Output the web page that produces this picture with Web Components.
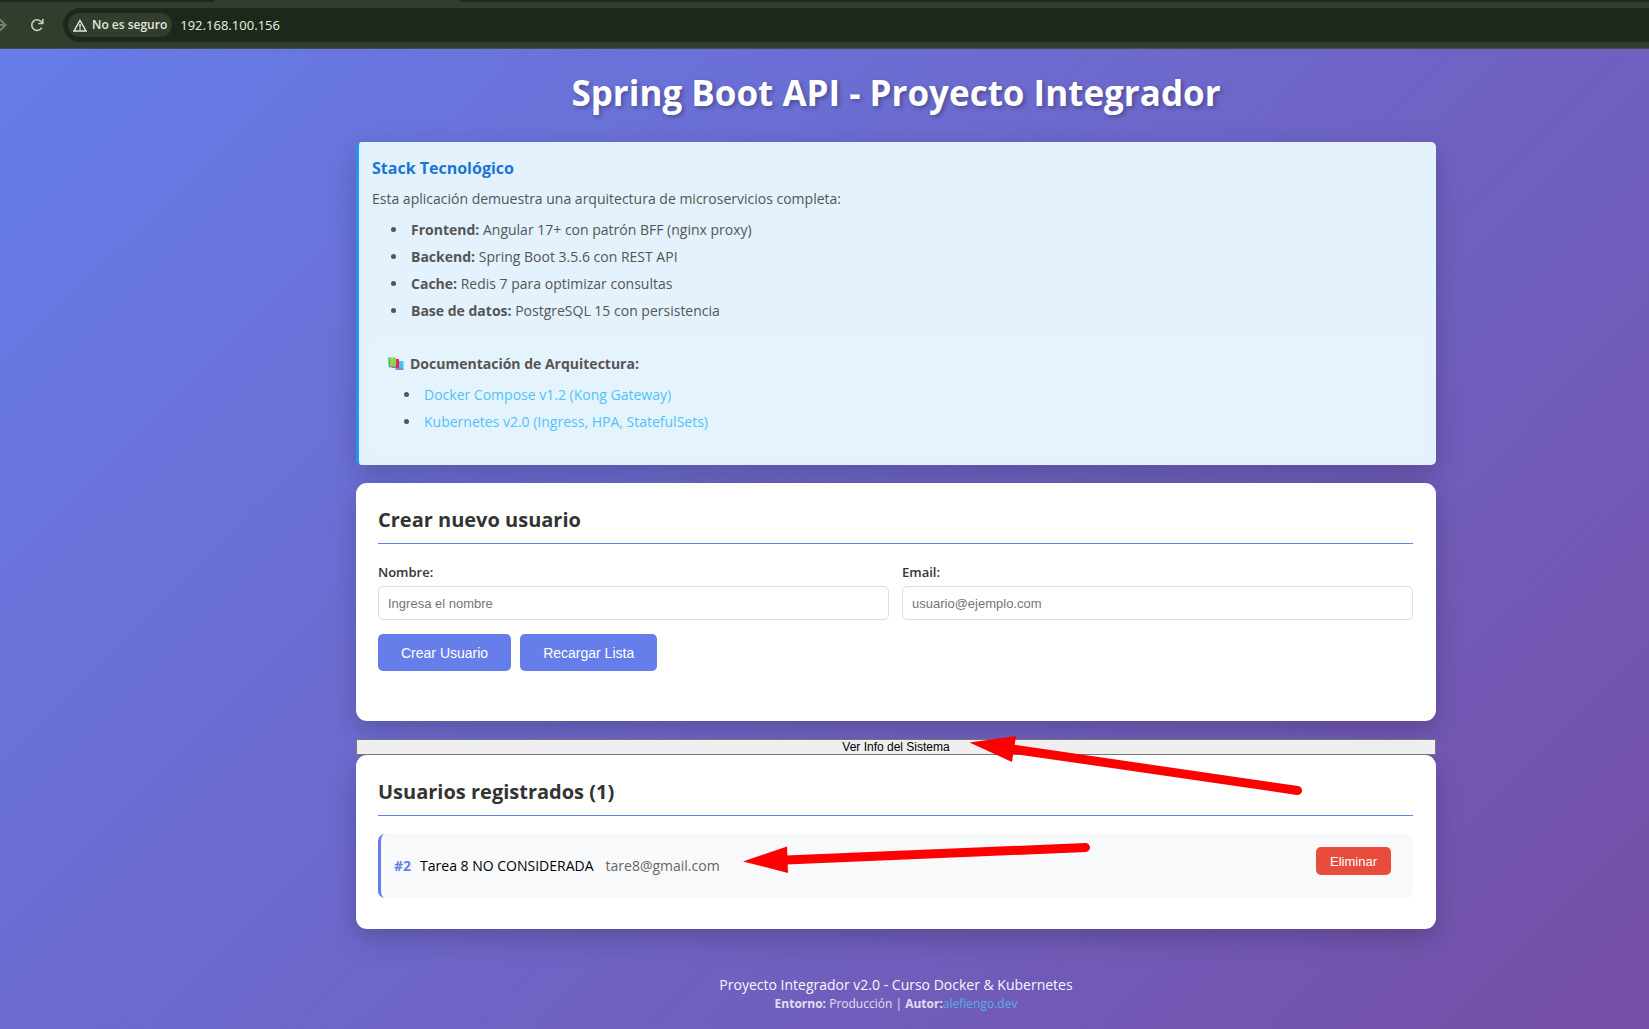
<!DOCTYPE html>
<html lang="es">
<head>
<meta charset="utf-8">
<title>Spring Boot API - Proyecto Integrador</title>
<style>
  html, body { margin: 0; min-height: 100vh; }
  body { display: flex; flex-direction: column; font-family: "Open Sans", "Noto Sans", sans-serif; font-size: 14px; background: #6b62c0; overflow: hidden; }
  integrador-app { flex: 1; }
</style>
</head>
<body>
<browser-bar status="No es seguro" address="192.168.100.156"></browser-bar>
<integrador-app></integrador-app>

<template id="t-browser">
  <style>
    :host { display: flex; flex-direction: column; height: 49px; box-sizing: border-box; background: #313d2d; border-bottom: 1px solid #474b4b; overflow: hidden; flex: none; }
    .tabs { display: flex; height: 2px; gap: 244px; flex: none; }
    .tabs i { background: #1c2819; }
    .tabs i:first-child { width: 215px; border-bottom-right-radius: 6px 2px; }
    .tabs i:last-child { flex: 1; border-bottom-left-radius: 6px 2px; }
    .row { display: flex; align-items: center; flex: 1; }
    svg { display: block; flex: none; }
    .nav { display: flex; align-items: center; gap: 23px; width: 63px; height: 16px; }
    .omni { flex: 1; height: 34px; display: flex; align-items: center; gap: 8px; box-sizing: border-box; padding-left: 5px; background: #1c2819; border-radius: 17px 0 0 17px; }
    .chip { display: flex; align-items: center; gap: 5px; height: 24px; padding: 0 5px; border: 0; border-radius: 12px; background: #313d2d; color: #e3e8df; font: 600 12px/24px "Open Sans", sans-serif; }
    .addr { flex: 1; border: 0; padding: 0; outline: 0; background: none; color: #e3e8df; font: 13px/20px "Noto Sans", sans-serif; }
  </style>
  <div class="tabs"><i></i><i></i></div>
  <div class="row">
    <div class="nav">
      <svg width="7" height="14" viewBox="0 0 7 14" fill="none" stroke="#77806f" stroke-width="2"><path d="M0 7h5M0 1.500 5.500 7 0 12.500"/></svg>
      <svg width="14" height="14" viewBox="0 0 14 14" fill="none" stroke="#c3d2bb" stroke-width="1.600"><path d="M11.700 9.600A5.300 5.300 0 1 1 11.200 3.700L12.700 5.200"/><path d="M12.800 1v4.500H8.300"/></svg>
    </div>
    <div class="omni">
      <button class="chip" type="button">
        <svg width="14" height="13" viewBox="0 0 14 13" fill="none" stroke="#e3e8df" stroke-width="1.500"><path d="M7 1.500 13 12H1Z"/><path d="M7 5v3.500M7 9.300v1.400"/></svg>
        <span></span>
      </button>
      <input class="addr" type="text" aria-label="Dirección">
    </div>
  </div>
</template>

<template id="t-app">
  <style>
    :host { display: block; box-sizing: border-box; padding: 19px 0 0 143px; background: linear-gradient(135deg, #667eea 0%, #764ba2 100%) -64px 0 / calc(100% + 271px) 100% no-repeat; }
    main { position: relative; display: flex; flex-direction: column; width: calc(100% - 80px); max-width: 1080px; margin: 0 auto; }
    h1 { margin: 0 0 25px; text-align: center; color: #fff; font-size: 35px; line-height: 49px; font-weight: 700; text-shadow: 2px 2px 4px rgba(0,0,0,.3); }
    stack-card, .form { margin-bottom: 18px; }
    .info { position: relative; z-index: 1; display: block; width: 100%; height: 16px; padding: 0; border: 1px solid #767676; background: #efefef; color: #000; font: 12px/14px "Liberation Sans", Arial, sans-serif; }
    .arrows { position: absolute; z-index: 2; left: 387px; top: 664px; margin-top: -1px; pointer-events: none; }
    footer { margin-top: 47px; text-align: center; color: #fff; line-height: 18px; }
    footer p { margin: 0; }
    footer .env { font-size: 12px; line-height: 20px; opacity: .8; }
    footer a { color: #4fc3f7; text-decoration: none; }
    footer p:first-child { opacity: .95; }
  </style>
  <main>
    <h1>Spring Boot API - Proyecto Integrador</h1>
    <stack-card></stack-card>
    <panel-card class="form" heading="Crear nuevo usuario"><user-form></user-form></panel-card>
    <button class="info" type="button">Ver Info del Sistema</button>
    <panel-card heading="Usuarios registrados (1)">
      <user-item uid="#2" name="Tarea 8 NO CONSIDERADA" email="tare8@gmail.com"></user-item>
    </panel-card>
    <footer>
      <p>Proyecto Integrador v2.0 - Curso Docker &amp; Kubernetes</p>
      <p class="env"><b>Entorno:</b> Producción | <b>Autor:</b><a href="#autor">alefiengo.dev</a></p>
    </footer>
    <svg class="arrows" width="560" height="148" viewBox="743 731 560 148" fill="#f00" stroke="none" aria-hidden="true">
      <path d="M969.500 742.500 1016 736 1012 762Z"/><path d="M1012 749 1297.500 790.500" stroke="#f00" stroke-width="9" stroke-linecap="round"/>
      <path d="M743 861.500 787 846.500 788 873Z"/><path d="M786 860 1085.500 847.500" stroke="#f00" stroke-width="9" stroke-linecap="round"/>
    </svg>
  </main>
</template>

<template id="t-stack">
  <style>
    :host { display: block; padding: 14px 13px 13px; border-left: 3px solid #2196f3; border-radius: 5px; background: #e3f2fd; color: #555; box-shadow: 0 9px 27px rgba(0,0,0,.2); }
    h3 { margin: 0 0 9px; color: #1976d2; font-size: 16px; line-height: 24px; }
    p { margin: 0 0 7px; line-height: 20px; }
    ul { margin: 0; padding-left: 36px; }
    li { padding-left: 3px; line-height: 27px; }
    .docs { margin-top: 16px; padding: 14px 16px 17px; border-radius: 7px; background: rgba(255,255,255,.1); }
    .docs p { display: flex; align-items: center; gap: 6px; font-weight: 700; }
    .docs ul { padding-left: 33px; }
    a { color: #4fc3f7; text-decoration: none; }
  </style>
  <h3>Stack Tecnológico</h3>
  <p>Esta aplicación demuestra una arquitectura de microservicios completa:</p>
  <ul>
    <li><b>Frontend:</b> Angular 17+ con patrón BFF (nginx proxy)</li>
    <li><b>Backend:</b> Spring Boot 3.5.6 con REST API</li>
    <li><b>Cache:</b> Redis 7 para optimizar consultas</li>
    <li><b>Base de datos:</b> PostgreSQL 15 con persistencia</li>
  </ul>
  <div class="docs">
    <p><svg width="16" height="14" viewBox="0 0 16 14" aria-hidden="true"><path fill="#45c1f5" d="M10 4h5.500v7H10z"/><path fill="#8b84c9" d="M7.500 11h8v2h-8z"/><path fill="#e3265b" d="M7.500 2h3.500v9H8V9h-.5z"/><path fill="#b06a8c" d="M4 9.500h4V11H4z"/><path fill="#8fd455" d="M.500.500H8V9H.500z"/><path fill="#5fb85f" d="M.500.500H2V9H.500z"/><path fill="#7f9a90" d="M1 9h7v1.500H1z"/></svg><span>Documentación de Arquitectura:</span></p>
    <ul>
      <li><a href="#compose">Docker Compose v1.2 (Kong Gateway)</a></li>
      <li><a href="#kubernetes">Kubernetes v2.0 (Ingress, HPA, StatefulSets)</a></li>
    </ul>
  </div>
</template>

<template id="t-panel">
  <style>
    :host { display: block; padding: 22px 23px 22px 22px; border-radius: 11px; background: #fff; box-shadow: 0 9px 27px rgba(0,0,0,.2); }
    h2 { margin: 0 0 18px; padding-bottom: 8px; border-bottom: 1px solid #667eea; color: #333; font-size: 20px; line-height: 30px; }
  </style>
  <h2></h2>
  <slot></slot>
</template>

<template id="t-form">
  <style>
    :host { display: block; padding-bottom: 28px; }
    .fields { display: grid; grid-template-columns: 1fr 1fr; gap: 13px; margin-bottom: 14px; }
    label { display: block; margin-bottom: 4px; color: #333; font-weight: 600; font-size: 13px; line-height: 20px; }
    input { display: block; width: 100%; height: 34px; box-sizing: border-box; padding: 0 9px; border: 1px solid #ddd; border-radius: 5px; background: #fff; font: 13px "Liberation Sans", Arial, sans-serif; }
    input::placeholder { color: #757575; }
    .actions { display: flex; gap: 9px; }
    button { height: 37px; padding: 0 23px; border: 0; border-radius: 5px; background: #667eea; color: #fff; font: 14px "Liberation Sans", Arial, sans-serif; }
  </style>
  <form>
    <div class="fields">
      <div><label for="nombre">Nombre:</label><input id="nombre" type="text" placeholder="Ingresa el nombre"></div>
      <div><label for="email">Email:</label><input id="email" type="email" placeholder="usuario@ejemplo.com"></div>
    </div>
    <div class="actions"><button type="button">Crear Usuario</button><button type="button">Recargar Lista</button></div>
  </form>
</template>

<template id="t-user">
  <style>
    :host { display: flex; align-items: flex-start; justify-content: space-between; box-sizing: border-box; height: 64px; margin-bottom: 9px; padding: 13px 22px 0 13px; border-left: 3px solid #667eea; border-radius: 7px; background: #f8f9fa; }
    .who { display: flex; align-items: baseline; padding-top: 9px; line-height: 20px; }
    .id { margin-right: 9px; color: #667eea; font-weight: 700; }
    .name { margin-right: 12px; color: #000; }
    .mail { color: #666; }
    button { height: 28px; padding: 0 14px; border: 0; border-radius: 5px; background: #e74c3c; color: #fff; font: 13px "Liberation Sans", Arial, sans-serif; }
  </style>
  <div class="who"><span class="id"></span><span class="name"></span><span class="mail"></span></div>
  <button type="button">Eliminar</button>
</template>

<script>
  class TemplateElement extends HTMLElement {
    constructor() {
      super();
      this.attachShadow({ mode: "open" }).append(
        document.getElementById(this.constructor.template).content.cloneNode(true));
    }
    fill(selector, attribute) {
      this.shadowRoot.querySelector(selector).textContent = this.getAttribute(attribute);
    }
  }
  customElements.define("browser-bar", class extends TemplateElement {
    static template = "t-browser";
    connectedCallback() {
      this.fill(".chip span", "status");
      this.shadowRoot.querySelector(".addr").value = this.getAttribute("address");
    }
  });
  customElements.define("stack-card", class extends TemplateElement { static template = "t-stack"; });
  customElements.define("panel-card", class extends TemplateElement {
    static template = "t-panel";
    connectedCallback() { this.fill("h2", "heading"); }
  });
  customElements.define("user-form", class extends TemplateElement { static template = "t-form"; });
  customElements.define("user-item", class extends TemplateElement {
    static template = "t-user";
    connectedCallback() {
      this.fill(".id", "uid");
      this.fill(".name", "name");
      this.fill(".mail", "email");
    }
  });
  customElements.define("integrador-app", class extends TemplateElement { static template = "t-app"; });
</script>
</body>
</html>
